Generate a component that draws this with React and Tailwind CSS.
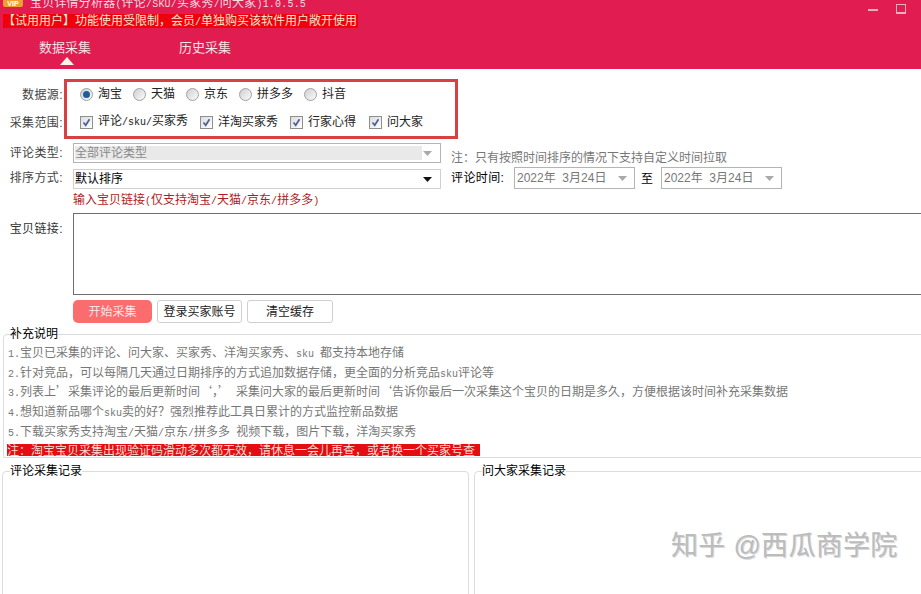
const font = "font-['Liberation_Sans','Noto_Sans_CJK_SC',sans-serif]";

// latin runs sit on a half-width grid in the original, 10px mono gives 6px per char
function Txt({ children }) {
  return children.split(/([A-Za-z0-9./() ]+)/).map((part, i) =>
    i % 2 ? (
      <span key={i} className="font-['Liberation_Mono',monospace] text-[10px] whitespace-pre">{part}</span>
    ) : (
      part
    )
  );
}

function Radio({ label, checked }) {
  return (
    <label className="flex items-center gap-[5px]">
      <span className="w-[13px] h-[13px] rounded-full border border-[#a0a0a0] bg-gradient-to-br from-[#d0d0d0] to-[#fbfbfb] flex items-center justify-center">
        {checked && <span className="w-[7px] h-[7px] rounded-full bg-[#1c5f9c]" />}
      </span>
      <span>{label}</span>
    </label>
  );
}

function Check({ label, className }) {
  return (
    <label className={`flex items-center gap-[5px] ${className}`}>
      <span className="w-[13px] h-[13px] border border-[#8e8f8f] bg-gradient-to-br from-[#dcdcdc] to-white flex items-center justify-center">
        <svg width="9" height="9" viewBox="0 0 9 9" fill="none">
          <path d="M1.5 4.5 L3.7 7.2 L7.5 1.2" stroke="#4a5f97" strokeWidth="1.7" />
        </svg>
      </span>
      <span><Txt>{label}</Txt></span>
    </label>
  );
}

function Arrow({ color = "#555" }) {
  return (
    <svg width="9" height="5" viewBox="0 0 9 5">
      <path d="M0 0 H9 L4.5 5 Z" fill={color} />
    </svg>
  );
}

function DateBox() {
  return (
    <div className="shrink-0 w-[121px] h-[22px] border border-[#b4b4b4] flex items-center justify-between pl-[2px] pr-[7px] text-[#777]">
      <span>2022年 &nbsp;3月24日</span>
      <Arrow color="#aaa" />
    </div>
  );
}

const notes = [
  ["1.", "宝贝已采集的评论、问大家、买家秀、洋淘买家秀、sku 都支持本地存储"],
  ["2.", "针对竞品，可以每隔几天通过日期排序的方式追加数据存储，更全面的分析竞品sku评论等"],
  ["3.", "列表上’采集评论的最后更新时间‘，’ 采集问大家的最后更新时间‘告诉你最后一次采集这个宝贝的日期是多久，方便根据该时间补充采集数据"],
  ["4.", "想知道新品哪个sku卖的好？强烈推荐此工具日累计的方式监控新品数据"],
  ["5.", "下载买家秀支持淘宝/天猫/京东/拼多多 视频下载，图片下载，洋淘买家秀"],
];

export default function App() {
  return (
    <div lang="zh-CN" className={`relative w-[921px] h-[594px] overflow-hidden bg-white text-[12px] leading-[16px] text-[#222] ${font}`}>
      {/* header */}
      <div className="h-[69px] bg-[#e01c50] text-[#f4d9df] overflow-hidden">
        <div className="h-[13px] flex items-start">
          <div className="ml-[3px] w-[20px] h-[7px] bg-[#f0a030] rounded-b-[2px] text-[7px] leading-[7px] font-bold text-white text-center">VIP</div>
          <span className="ml-[7px] -mt-[5px] whitespace-nowrap tracking-[0.2px]"><Txt>宝贝详情分析器(评论/SKU/买家秀/问大家)1.0.5.5</Txt></span>
          <div className="ml-auto mr-[15px] flex items-start">
            <div className="mt-[9px] w-[10px] h-[2px] bg-[#eab0bf]" />
            <div className="ml-[18px] mt-[4px] w-[10px] h-[10px] border border-[#eab0bf] border-b-[2px]" />
          </div>
        </div>
        <div className="ml-[3px] mt-[1px] w-[355px] h-[14px] bg-[#f0000c] text-[#fbe6cf] leading-[14px] whitespace-nowrap"><Txt>【试用用户】功能使用受限制，会员/单独购买该软件用户敞开使用</Txt></div>
        <div className="mt-[12px] flex text-[13px] text-[#f7e3e7]">
          <div className="ml-[39px] w-[140px] relative">
            数据采集
            <svg className="absolute left-[21px] top-[17px]" width="14" height="8" viewBox="0 0 14 8">
              <path d="M7 0 L14 8 H0 Z" fill="#fdf3e4" />
            </svg>
          </div>
          <div>历史采集</div>
        </div>
      </div>

      {/* source + scope */}
      <div className="flex mt-[10px]">
        <div className="shrink-0 w-[63px] text-right text-[#444] pt-[8px] tracking-[0.4px]">
          <div className="h-[28px]">数据源:</div>
          <div>采集范围:</div>
        </div>
        <div className="shrink-0 ml-[1px] w-[394px] h-[60px] border-[3px] border-[#d8413f] pl-[13px]">
          <div className="h-[24px] flex items-center gap-[11px]">
            <Radio label="淘宝" checked />
            <Radio label="天猫" />
            <Radio label="京东" />
            <Radio label="拼多多" />
            <Radio label="抖音" />
          </div>
          <div className="mt-[4px] h-[24px] flex items-center">
            <Check label="评论/sku/买家秀" className="w-[120px]" />
            <Check label="洋淘买家秀" className="w-[90px]" />
            <Check label="行家心得" className="w-[79px]" />
            <Check label="问大家" />
          </div>
        </div>
      </div>

      {/* selects */}
      <div className="flex mt-[4px] h-[20px]">
        <div className="shrink-0 w-[63px] text-right text-[#444] pt-[2px] tracking-[0.4px]">评论类型:</div>
        <div className="shrink-0 ml-[10px] w-[368px] border border-[#b4b4b4] flex items-center pl-[1px] pr-[3px] text-[#8a8a8a]">
          <div className="w-[347px] h-[14px] bg-[#e9e9e9] leading-[14px]">全部评论类型</div>
          <div className="ml-auto mr-[5px]"><Arrow color="#aaa" /></div>
        </div>
        <div className="ml-[10px] mt-[7px] text-[#777] whitespace-nowrap">注：只有按照时间排序的情况下支持自定义时间拉取</div>
      </div>
      <div className="flex mt-[4px] h-[22px] items-start">
        <div className="shrink-0 w-[63px] text-right text-[#444] pt-[3px] tracking-[0.4px]">排序方式:</div>
        <div className="shrink-0 ml-[10px] mt-[2px] w-[368px] h-[20px] border border-[#d0d0d0] flex items-center justify-between pl-[1px] pr-[8px] text-black">
          <span>默认排序</span>
          <Arrow color="#111" />
        </div>
        <div className="shrink-0 ml-[10px] mt-[3px] w-[63px] text-black whitespace-nowrap tracking-[0.4px]">评论时间:</div>
        <DateBox />
        <div className="shrink-0 w-[26px] text-center text-black mt-[4px] -ml-[1px] mr-[1px]">至</div>
        <DateBox />
      </div>
      <div className="ml-[73px] mt-[1px] h-[20px] leading-[20px] text-[#b01c24]"><Txt>输入宝贝链接(仅支持淘宝/天猫/京东/拼多多)</Txt></div>

      {/* link input */}
      <div className="flex mt-[3px]">
        <div className="shrink-0 w-[63px] text-right text-[#333] pt-[8px] tracking-[0.4px]">宝贝链接:</div>
        <div className="shrink-0 ml-[10px] w-[860px] h-[82px] border border-[#6e6e6e]" />
      </div>

      {/* buttons */}
      <div className="flex ml-[73px] mt-[5px] h-[23px] gap-[5px]">
        <button className="w-[79px] rounded-[5px] bg-[#fb6c6f] text-[#fbe6e6]">开始采集</button>
        <button className="w-[85px] rounded-[3px] border border-[#d0d0d0] text-[#222]">登录买家账号</button>
        <button className="w-[86px] rounded-[3px] border border-[#d0d0d0] text-[#222]">清空缓存</button>
      </div>

      {/* notes */}
      <fieldset className="ml-[3px] mt-[2px] w-[930px] h-[133px] border border-[#dcdcdc] rounded-tl-[4px] pl-[3px]">
        <legend className="ml-[3px] h-[18px] leading-[18px] text-black">补充说明</legend>
        <div className="-mt-[1px] text-[#777] whitespace-nowrap font-['Noto_Sans_CJK_SC',sans-serif]">
          {notes.map(([n, text]) => (
            <div key={n} className="ml-[1px] h-[19.7px] leading-[19.7px]">
              <Txt>{n}</Txt><Txt>{text}</Txt>
            </div>
          ))}
          <div className="mt-[4px] w-[473px] h-[12px] leading-[12px] bg-[#e30d12] text-[#fbdcd4]">注：淘宝宝贝采集出现验证码滑动多次都无效，请休息一会儿再查，或者换一个买家号查</div>
        </div>
      </fieldset>

      {/* records */}
      <div className="flex mt-[4px]">
        <fieldset className="shrink-0 ml-[2px] w-[467px] h-[140px] border border-[#dcdcdc] rounded-t-[4px]">
          <legend className="ml-[7px] h-[18px] leading-[18px] text-black">评论采集记录</legend>
        </fieldset>
        <fieldset className="shrink-0 ml-[5px] w-[460px] h-[140px] border border-[#dcdcdc] rounded-t-[4px]">
          <legend className="ml-[7px] h-[18px] leading-[18px] text-black">问大家采集记录</legend>
        </fieldset>
      </div>

      {/* watermark */}
      <div className="absolute left-[671px] top-[527px] text-[27px] leading-[38px] tracking-[0.3px] text-[#bcbcbc] whitespace-nowrap [text-shadow:1px_1px_0_#d8d8d8]">知乎 @西瓜商学院</div>
    </div>
  );
}
